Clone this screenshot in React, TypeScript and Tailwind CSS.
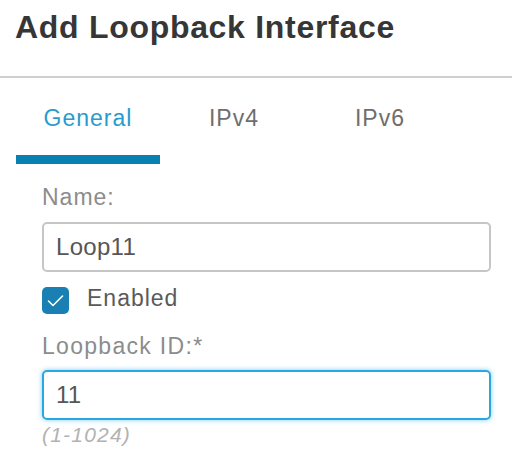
import React, { useState } from 'react';

const tabs = ['General', 'IPv4', 'IPv6'];

const App: React.FC = () => {
  const [active, setActive] = useState('General');
  const [name, setName] = useState('Loop11');
  const [enabled, setEnabled] = useState(true);
  const [loopId, setLoopId] = useState('11');

  return (
    <div className="w-[512px] h-[456px] bg-white overflow-hidden" style={{ fontFamily: '"Liberation Sans", Arial, sans-serif' }}>
      {/* header */}
      <div className="h-[78px] border-b-2 border-[#cfcfcf] pt-[7px] pl-[15px]">
        <h1 className="text-[32px] leading-[40px] font-bold text-[#363636] tracking-[0.7px]">Add Loopback Interface</h1>
      </div>

      {/* tabs */}
      <div className="flex pl-[16px] gap-[2px]">
        {tabs.map((t) => (
          <button
            key={t}
            onClick={() => setActive(t)}
            className="w-[144px] flex flex-col items-center pt-[25px]"
          >
            <span
              className={
                'text-[23px] leading-[30px] tracking-[1px] ' +
                (active === t ? 'text-[#2a9bcd]' : 'text-[#6e6e6e]')
              }
            >
              {t}
            </span>
            <span className={'mt-[22px] h-[9px] w-full ' + (active === t ? 'bg-[#0a7fb2]' : 'bg-transparent')} />
          </button>
        ))}
      </div>

      {/* form */}
      <div className="pl-[42px] pr-[21px] pt-[20px] flex flex-col">
        <label htmlFor="name" className="text-[23px] leading-[26px] tracking-[1px] text-[#8c8c8c]">Name:</label>
        <input
          id="name"
          value={name}
          onChange={(e) => setName(e.target.value)}
          className="mt-[12px] h-[50px] w-full border-2 border-[#c6c6c6] rounded-[5px] px-[12px] text-[24px] tracking-[0.3px] text-[#565656] outline-none"
        />

        <label className="mt-[15px] flex items-start gap-[18px] cursor-pointer">
          <span
            onClick={() => setEnabled(!enabled)}
            className={
              'w-[27px] h-[27px] rounded-[5px] flex items-center justify-center ' +
              (enabled ? 'bg-[#1a80b4]' : 'border-2 border-[#c6c6c6] bg-white')
            }
          >
            {enabled && (
              <svg width="19" height="15" viewBox="0 0 19 15" fill="none">
                <path d="M2.5 8 L7 12.5 L16.5 3" stroke="white" strokeWidth="1.6" strokeLinecap="round" strokeLinejoin="round" />
              </svg>
            )}
          </span>
          <span className="text-[23px] leading-[23px] tracking-[1px] text-[#5a5a5a]">Enabled</span>
        </label>

        <label htmlFor="loopid" className="mt-[19px] text-[23px] leading-[26px] tracking-[1.3px] text-[#8c8c8c]">Loopback ID:*</label>
        <input
          id="loopid"
          value={loopId}
          onChange={(e) => setLoopId(e.target.value)}
          className="mt-[11px] h-[50px] w-full border-2 border-[#2aa7df] rounded-[5px] px-[12px] text-[24px] tracking-[0.3px] text-[#565656] outline-none shadow-[0_0_5px_#7ccbef]"
        />
        <span className="mt-[3px] text-[21px] leading-[24px] italic tracking-[1.2px] text-[#b2b2b2]">(1-1024)</span>
      </div>
    </div>
  );
};

export default App;
